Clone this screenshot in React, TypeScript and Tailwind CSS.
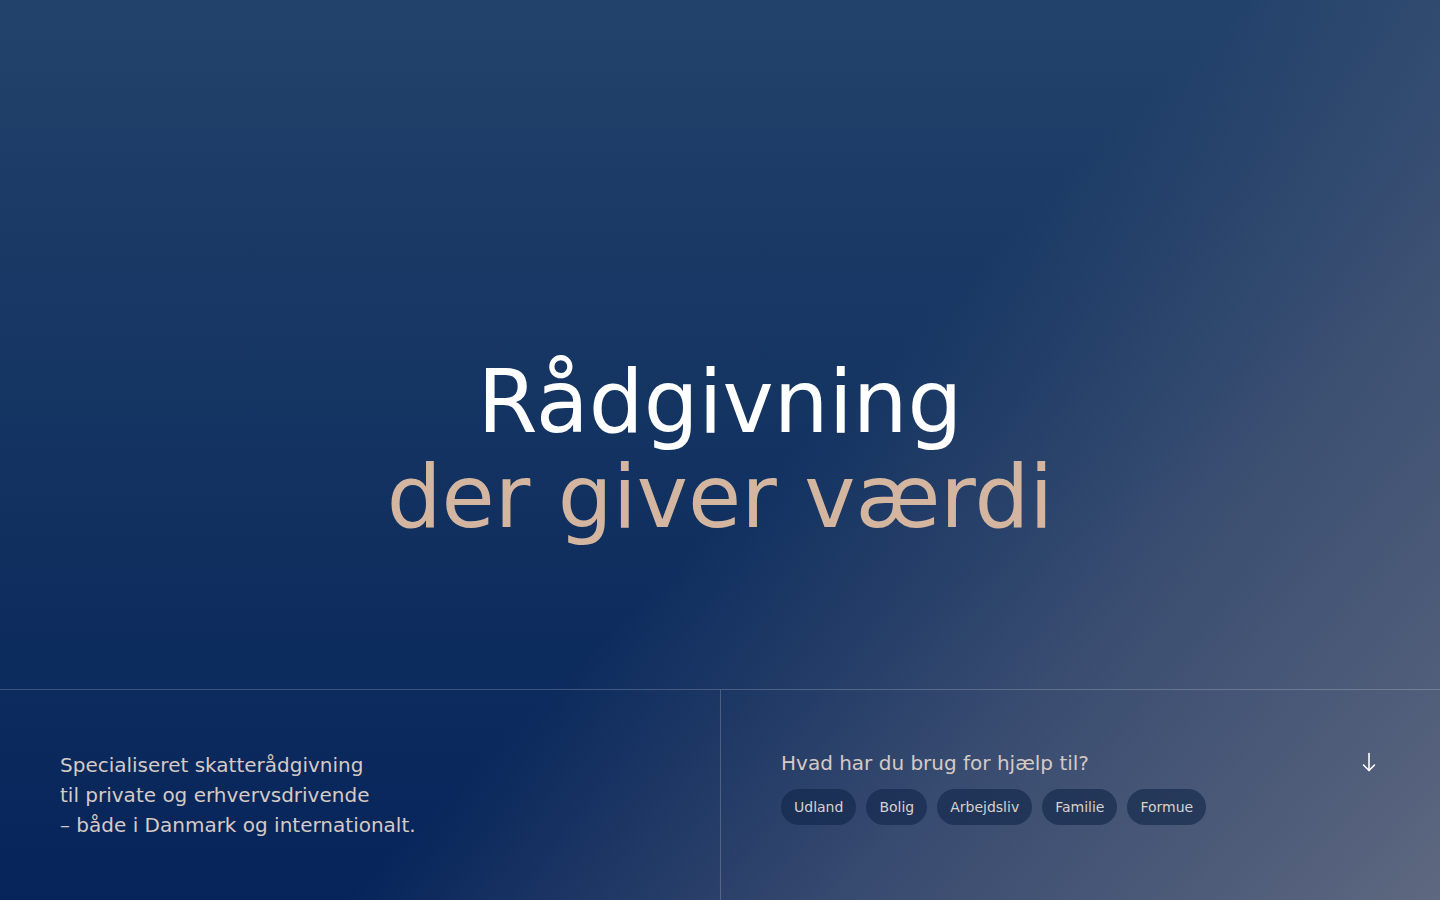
const topics = ["Udland", "Bolig", "Arbejdsliv", "Familie", "Formue"];

export default function App() {
  return (
    <div className="relative flex h-[900px] w-full flex-col overflow-hidden bg-[linear-gradient(to_bottom,#23426b_0%,#143462_45%,#06245a_100%)] font-['DejaVu_Sans',sans-serif]">
      {/* grey glow from the lower right */}
      <div className="pointer-events-none absolute inset-0 bg-[linear-gradient(135deg,rgba(94,104,128,0)_53%,rgba(94,104,128,0.55)_74%,rgba(94,104,128,1)_100%)]" />

      {/* Hero */}
      <div className="relative flex flex-1 flex-col items-center justify-center pt-[211px] text-center">
        <h1 className="text-[86.5px] font-normal leading-[95px] text-white">
          Rådgivning
          <br />
          <span className="text-[#d4b6a0]">der giver værdi</span>
        </h1>
      </div>

      {/* Bottom bar */}
      <div className="relative grid h-[211px] grid-cols-2 border-t border-white/20">
        <div className="flex flex-col justify-center px-[60px]">
          <p className="text-[20px] leading-[30px] text-[#d6cac4]">
            Specialiseret skatterådgivning
            <br />
            til private og erhvervsdrivende
            <br />– både i Danmark og internationalt.
          </p>
        </div>
        <div className="flex flex-col justify-center border-l border-white/20 px-[60px] pb-[17px]">
          <div className="flex items-center justify-between">
            <h2 className="text-[20px] leading-[30px] text-[#d6cac4]">Hvad har du brug for hjælp til?</h2>
            <svg
              width="16"
              height="20"
              viewBox="0 0 16 20"
              fill="none"
              stroke="white"
              strokeWidth="1.6"
              strokeLinecap="round"
              strokeLinejoin="round"
              className="mr-[3px] mb-[2px]"
            >
              <path d="M8 1.5v17" />
              <path d="M2.5 13l5.5 5.5 5.5-5.5" />
            </svg>
          </div>
          <div className="mt-[11px] flex gap-[10px]">
            {topics.map((t) => (
              <button
                key={t}
                className="h-[36px] rounded-full bg-[#0f2548]/60 px-[13px] text-[14px] text-[#d9d0ce]"
              >
                {t}
              </button>
            ))}
          </div>
        </div>
      </div>
    </div>
  );
}
